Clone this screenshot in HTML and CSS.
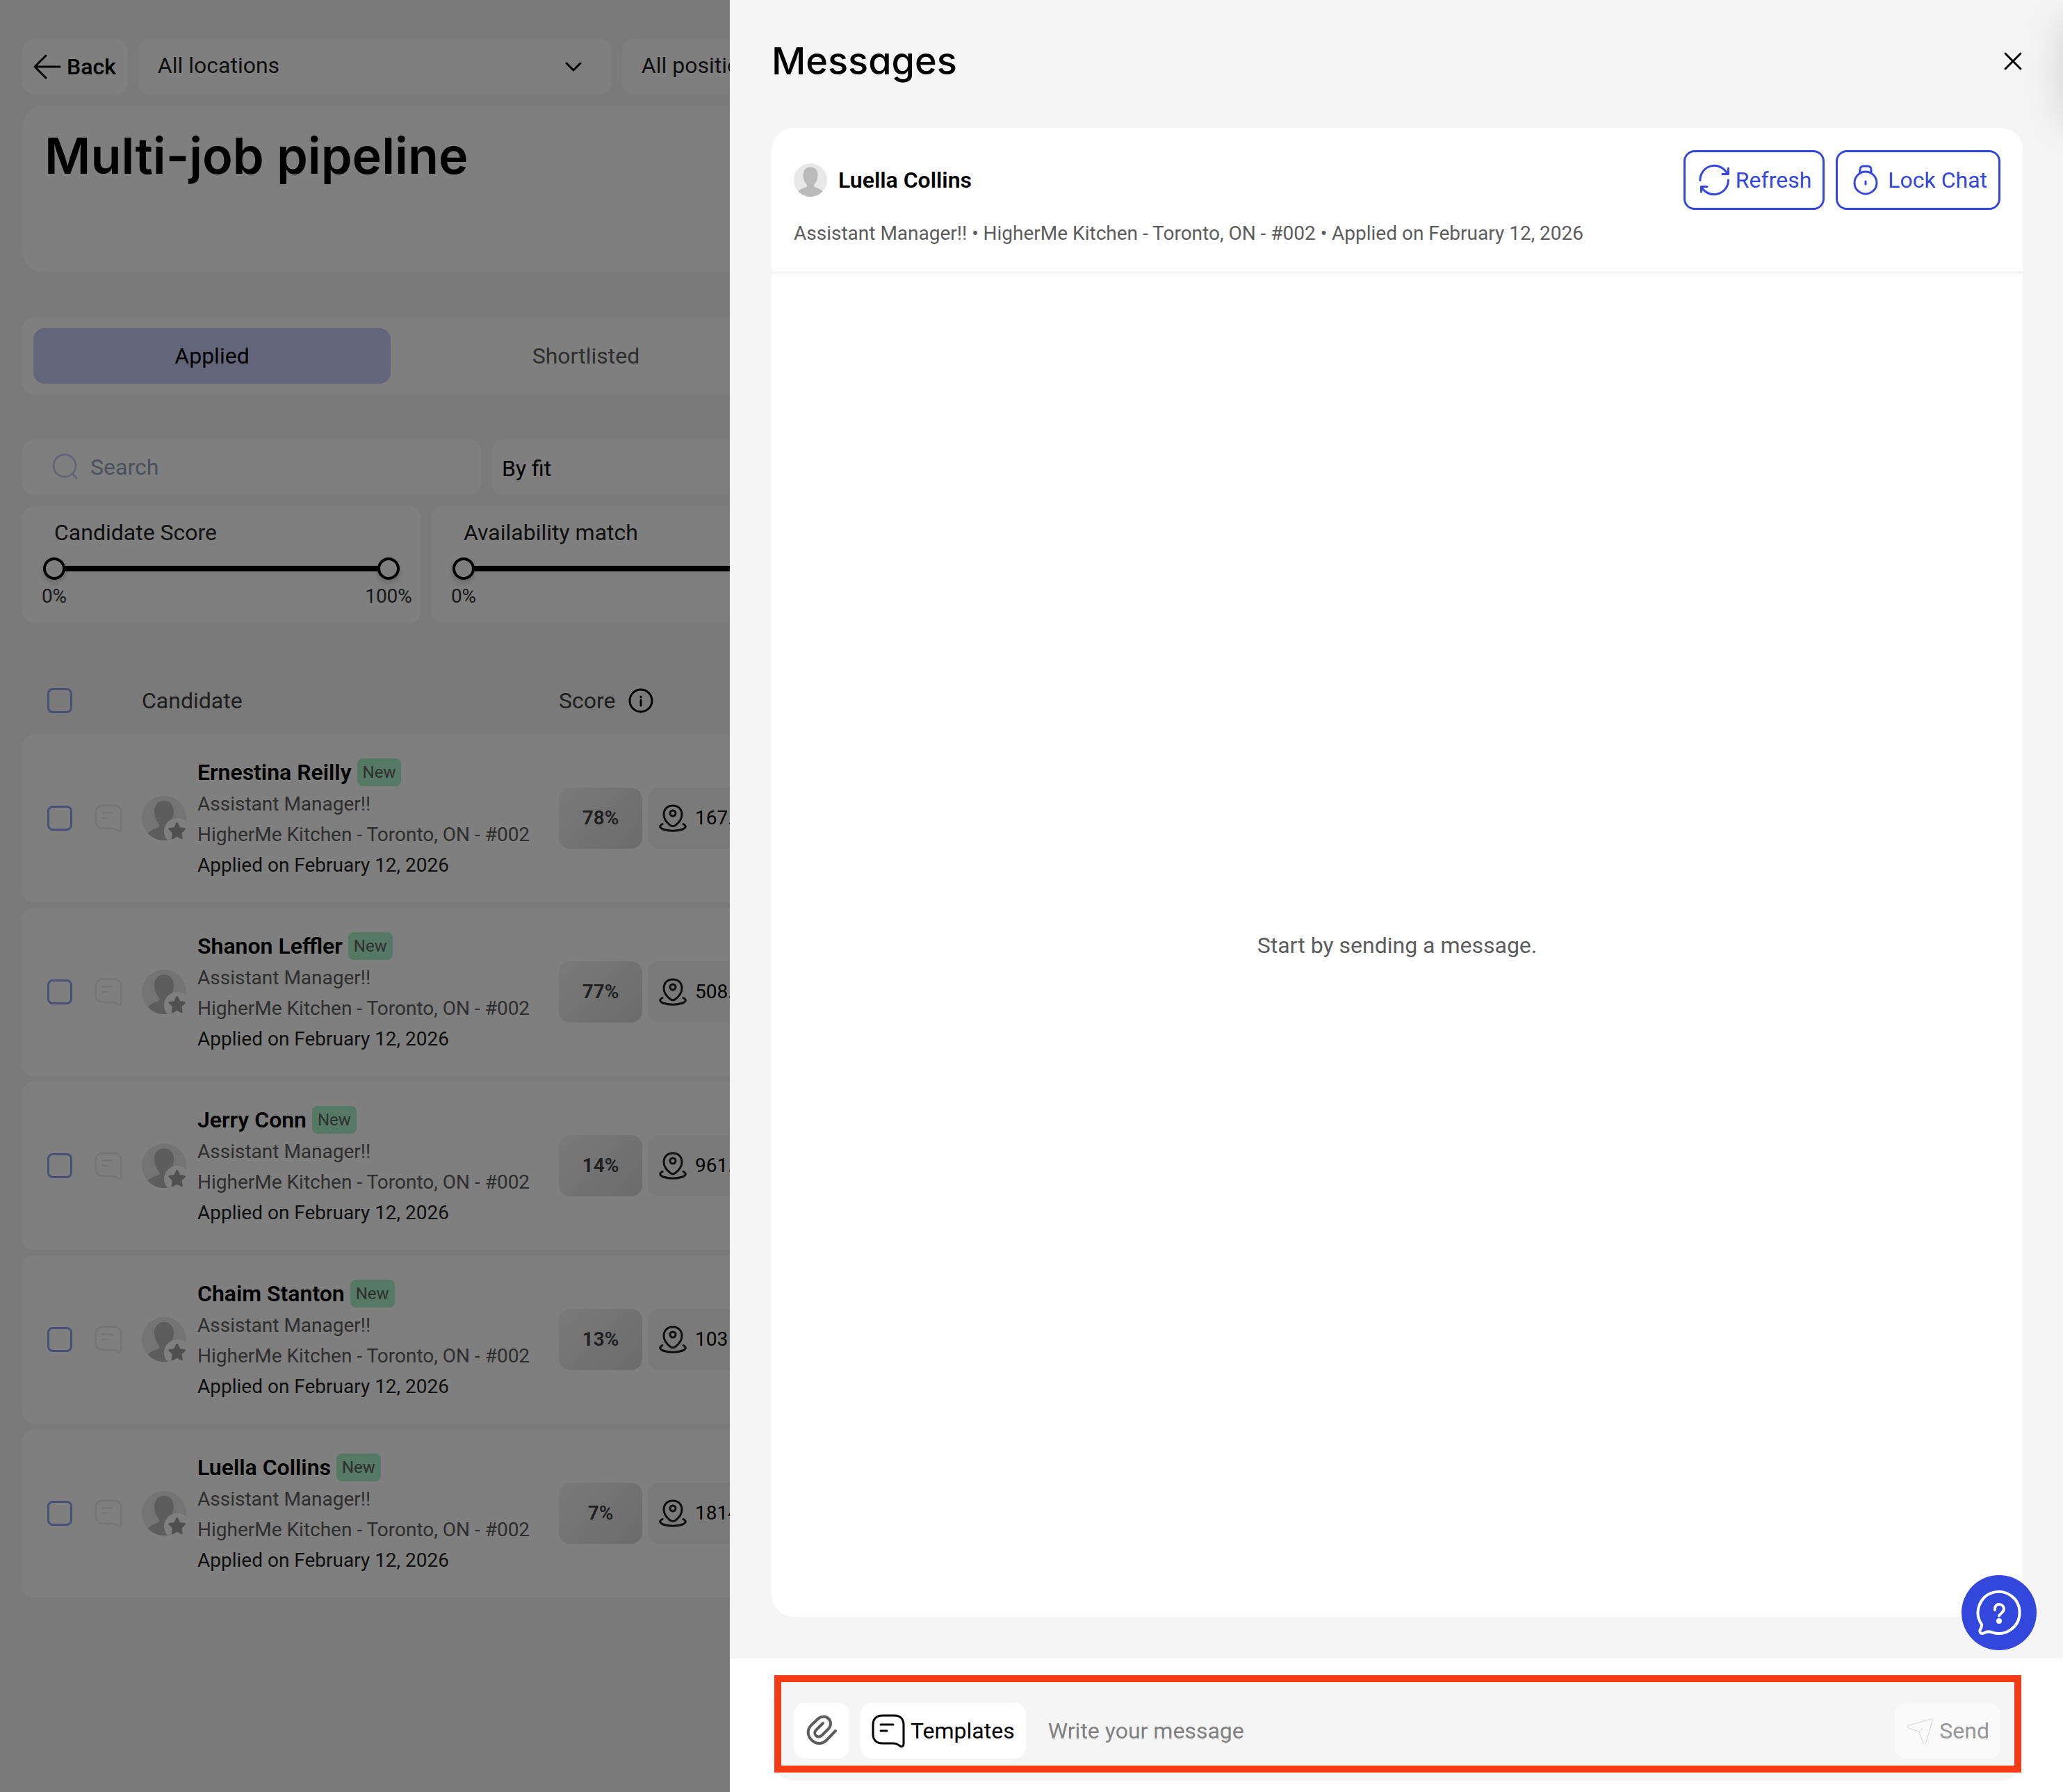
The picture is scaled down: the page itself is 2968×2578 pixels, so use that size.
FILE: index.html
```html
<!DOCTYPE html>
<html lang="en">
<head>
<meta charset="utf-8">
<meta name="viewport" content="width=device-width, initial-scale=1">
<title>Multi-job pipeline</title>
<link rel="stylesheet" href="styles.css">
</head>
<body>
<svg class="sprite" aria-hidden="true">
  <symbol id="note" viewBox="0 0 48 48">
    <path d="M15 2H33C41 2 46 7 46 15V43C46 46 44 47 41 46C38 44 37 42 32 42H15C7 42 2 37 2 29V15C2 7 7 2 15 2Z"/>
    <path d="M13 15H31M13 24H22"/>
  </symbol>
  <symbol id="person" viewBox="0 0 64 64">
    <circle cx="32" cy="32" r="32" fill="#e8e8e8"/>
    <path fill="#bababa" d="M32 7C40 7 46 13 46 22C46 32 42 37 39 41C38 44 39 45 42 46C48 48 52 50 55.300 54A32 32 0 0 1 8.700 54C12 50 16 48 22 46C25 45 26 44 25 41C22 37 18 32 18 22C18 13 24 7 32 7Z"/>
  </symbol>
  <symbol id="person-starred" viewBox="0 0 64 64">
    <clipPath id="round"><circle cx="32" cy="32" r="32"/></clipPath>
    <use href="#person"/>
    <circle cx="51" cy="51" r="19" fill="#fff" clip-path="url(#round)"/>
    <path fill="#a0a0a0" stroke="#a0a0a0" stroke-width="3" stroke-linejoin="round" d="M50.700 39.500L54 46.500L61.500 47.500L56 53L57.300 60.800L50.700 57.200L44.100 60.800L45.400 53L39.900 47.500L47.400 46.500Z"/>
  </symbol>
  <symbol id="pin" viewBox="0 0 40 40">
    <path d="M20 2C28 2 33 7 33 15C33 22 28 27 23.500 30.500C21 32.300 19 32.300 16.500 30.500C12 27 7 22 7 15C7 7 12 2 20 2Z"/>
    <circle cx="20" cy="13" r="4"/>
    <path d="M5 28.500C0 31 1 34 6 36C14 39 26 39 34 36C39 34 40 31 35 28.500"/>
  </symbol>
</svg>

<main class="page">
  <div class="toolbar">
    <button class="back" type="button">
      <svg class="icon-40" viewBox="0 0 40 40" aria-hidden="true"><path d="M38 20H2M18 4L2 20L18 36"/></svg>
      Back
    </button>
    <div class="select">
      <select aria-label="Location"><option>All locations</option></select>
      <svg viewBox="0 0 24 14" aria-hidden="true"><path d="M2 2L12 12L22 2"/></svg>
    </div>
    <div class="select">
      <select aria-label="Position"><option>All positions</option></select>
      <svg viewBox="0 0 24 14" aria-hidden="true"><path d="M2 2L12 12L22 2"/></svg>
    </div>
  </div>

  <header class="title-card"><h1>Multi-job pipeline</h1></header>

  <nav class="tabs">
    <button class="tab active" type="button">Applied</button>
    <button class="tab" type="button">Shortlisted</button>
  </nav>

  <div class="filters">
    <label class="search">
      <svg viewBox="0 0 40 40" aria-hidden="true"><circle cx="19" cy="18" r="16"/><path d="M31 30L36 36"/></svg>
      <input type="search" placeholder="Search" aria-label="Search">
    </label>
    <select class="sort" aria-label="Sort"><option>By fit</option></select>
  </div>

  <div class="ranges">
    <fieldset class="range">
      <legend>Candidate Score</legend>
      <div class="slider">
        <input type="range" value="0" aria-label="Minimum candidate score">
        <input type="range" value="100" aria-label="Maximum candidate score">
      </div>
      <div class="scale"><span>0%</span><span>100%</span></div>
    </fieldset>
    <fieldset class="range">
      <legend>Availability match</legend>
      <div class="slider">
        <input type="range" value="0" aria-label="Minimum availability match">
        <input type="range" value="100" aria-label="Maximum availability match">
      </div>
      <div class="scale"><span>0%</span><span>100%</span></div>
    </fieldset>
  </div>

  <table class="candidates">
    <colgroup><col class="col-check"><col class="col-note"><col class="col-person"><col></colgroup>
    <thead>
      <tr>
        <th><input type="checkbox" aria-label="Select all"></th>
        <th></th>
        <th>Candidate</th>
        <th>
          <div class="score-head">Score
            <svg viewBox="0 0 36 36" aria-hidden="true"><circle cx="18" cy="18" r="16"/><path d="M18 12V13M18 17V25"/></svg>
          </div>
        </th>
      </tr>
    </thead>
    <tbody>
      <tr>
        <td><input type="checkbox" aria-label="Select Ernestina Reilly"></td>
        <td><svg class="note"><use href="#note"/></svg></td>
        <td><div class="person"><svg class="avatar"><use href="#person-starred"/></svg><div>
          <div class="name">Ernestina Reilly <span class="badge">New</span></div>
          <div class="meta">Assistant Manager!!</div>
          <div class="meta">HigherMe Kitchen - Toronto, ON - #002</div>
          <div class="meta date">Applied on February 12, 2026</div>
        </div></div></td>
        <td><div class="scores"><span class="score">78%</span><span class="distance"><svg><use href="#pin"/></svg>167.</span></div></td>
      </tr>
      <tr>
        <td><input type="checkbox" aria-label="Select Shanon Leffler"></td>
        <td><svg class="note"><use href="#note"/></svg></td>
        <td><div class="person"><svg class="avatar"><use href="#person-starred"/></svg><div>
          <div class="name">Shanon Leffler <span class="badge">New</span></div>
          <div class="meta">Assistant Manager!!</div>
          <div class="meta">HigherMe Kitchen - Toronto, ON - #002</div>
          <div class="meta date">Applied on February 12, 2026</div>
        </div></div></td>
        <td><div class="scores"><span class="score">77%</span><span class="distance"><svg><use href="#pin"/></svg>508.</span></div></td>
      </tr>
      <tr>
        <td><input type="checkbox" aria-label="Select Jerry Conn"></td>
        <td><svg class="note"><use href="#note"/></svg></td>
        <td><div class="person"><svg class="avatar"><use href="#person-starred"/></svg><div>
          <div class="name">Jerry Conn <span class="badge">New</span></div>
          <div class="meta">Assistant Manager!!</div>
          <div class="meta">HigherMe Kitchen - Toronto, ON - #002</div>
          <div class="meta date">Applied on February 12, 2026</div>
        </div></div></td>
        <td><div class="scores"><span class="score">14%</span><span class="distance"><svg><use href="#pin"/></svg>961.</span></div></td>
      </tr>
      <tr>
        <td><input type="checkbox" aria-label="Select Chaim Stanton"></td>
        <td><svg class="note"><use href="#note"/></svg></td>
        <td><div class="person"><svg class="avatar"><use href="#person-starred"/></svg><div>
          <div class="name">Chaim Stanton <span class="badge">New</span></div>
          <div class="meta">Assistant Manager!!</div>
          <div class="meta">HigherMe Kitchen - Toronto, ON - #002</div>
          <div class="meta date">Applied on February 12, 2026</div>
        </div></div></td>
        <td><div class="scores"><span class="score">13%</span><span class="distance"><svg><use href="#pin"/></svg>103</span></div></td>
      </tr>
      <tr>
        <td><input type="checkbox" aria-label="Select Luella Collins"></td>
        <td><svg class="note"><use href="#note"/></svg></td>
        <td><div class="person"><svg class="avatar"><use href="#person-starred"/></svg><div>
          <div class="name">Luella Collins <span class="badge">New</span></div>
          <div class="meta">Assistant Manager!!</div>
          <div class="meta">HigherMe Kitchen - Toronto, ON - #002</div>
          <div class="meta date">Applied on February 12, 2026</div>
        </div></div></td>
        <td><div class="scores"><span class="score">7%</span><span class="distance"><svg><use href="#pin"/></svg>1814</span></div></td>
      </tr>
    </tbody>
  </table>
</main>

<div class="overlay">
  <section class="drawer" role="dialog" aria-labelledby="drawer-title">
    <header class="drawer-head">
      <h2 id="drawer-title">Messages</h2>
      <button class="close" type="button" aria-label="Close">
        <svg viewBox="0 0 28 28" aria-hidden="true"><path d="M3 3L25 25M25 3L3 25"/></svg>
      </button>
    </header>

    <div class="chat">
      <div class="chat-head">
        <div class="chat-row">
          <svg class="avatar-small"><use href="#person"/></svg>
          <span class="chat-name">Luella Collins</span>
          <button class="outline" type="button">
            <svg viewBox="0 0 48 48" aria-hidden="true"><path d="M5 24.500A20.500 20.500 0 0 1 44 15M45.500 7V15.500H37M45.500 24A20.500 20.500 0 0 1 7 34M6.500 41V33.500H15"/></svg>
            Refresh
          </button>
          <button class="outline" type="button">
            <svg viewBox="0 0 48 48" aria-hidden="true"><circle cx="24" cy="28" r="16"/><path d="M16 14V9C16 6 18 4 21 4H27C30 4 32 6 32 9V14M24 26V30"/></svg>
            Lock Chat
          </button>
        </div>
        <p>Assistant Manager!! • HigherMe Kitchen - Toronto, ON - #002 • Applied on February 12, 2026</p>
      </div>
      <div class="chat-body">Start by sending a message.</div>
    </div>

    <footer class="drawer-foot">
      <form class="composer">
        <button class="attach" type="button" aria-label="Attach file">
          <svg viewBox="0 0 48 48" aria-hidden="true"><path d="M44 24L31 37.500C25 43.500 17 43.500 10.500 38C3 31.500 3 22.500 9 16L18 7.500C23 2.500 30 2.500 34 6.500C38 10.500 38 16.500 34 21L25 30C22 33 18 33 16 31C13.500 28.500 14 25 16 23L26 13"/></svg>
        </button>
        <button class="templates" type="button">
          <svg aria-hidden="true"><use href="#note"/></svg>
          Templates
        </button>
        <input type="text" placeholder="Write your message" aria-label="Message">
        <button class="send" type="submit" disabled>
          <svg viewBox="0 0 40 40" aria-hidden="true"><path d="M3 12.500L36 2.800Q39 2.300 38.300 5L28.500 38Q27 41 25 38L19 21.500L2.500 15.500Q0 14 3 12.500ZM19 21.500L24 16.500"/></svg>
          Send
        </button>
        <span class="highlight"></span>
      </form>
    </footer>

    <div class="edge-tab"></div>
    <button class="help" type="button" aria-label="Help">
      <svg viewBox="0 0 108 108" aria-hidden="true">
        <path d="M29 71A30 30 0 1 1 44 82.300C39 80.500 36 81 32 83.500C28 85 26 83 26.500 79C28.500 76 29.500 74 29 71Z"/>
        <path d="M48 50C47.500 45 50 42 54 42C58 42 61 45 61 49C61 53 56 55 54 58.500"/>
        <circle class="dot" cx="54" cy="66" r="4"/>
      </svg>
    </button>
  </section>
</div>
</body>
</html>
```
FILE: styles.css
```css
* {
  box-sizing: border-box;
}

body {
  margin: 0;
  background: #f5f5f5;
  color: #1f1f1f;
  font: 400 32px/48px Roboto, "Liberation Sans", sans-serif;
}

button,
input,
select {
  margin: 0;
  padding: 0;
  border: 0;
  background: none;
  color: inherit;
  font: inherit;
}

button {
  display: flex;
  align-items: center;
  justify-content: center;
  gap: 8px;
  white-space: nowrap;
}

h1,
h2,
p {
  margin: 0;
}

h1,
h2 {
  color: #000;
  font-family: Inter, "Liberation Sans", sans-serif;
  font-feature-settings: "cv11";
}

svg {
  display: block;
  flex: none;
  fill: none;
  stroke: currentColor;
  stroke-width: 3;
  stroke-linecap: round;
  stroke-linejoin: round;
}

.sprite {
  position: absolute;
  width: 0;
  height: 0;
}

/* Pipeline page */

.page {
  min-height: 100vh;
  padding: 56px 32px 0;
}

.toolbar,
.filters,
.ranges {
  display: flex;
  gap: 16px;
}

.back {
  height: 80px;
  padding: 0 16px;
  border-radius: 16px;
  background: #fff;
  color: #000;
  font-weight: 500;
}

.icon-40 {
  width: 40px;
  height: 40px;
}

.select {
  display: grid;
  width: 680px;
  align-items: center;
}

.select select,
.select svg {
  grid-area: 1 / 1;
}

.select select {
  height: 80px;
  padding: 0 80px 4px 28px;
  border-radius: 16px;
  background: #fff;
  appearance: none;
}

.select svg {
  width: 24px;
  height: 14px;
  margin-right: 42px;
  justify-self: end;
  color: #000;
}

.title-card {
  height: 240px;
  margin-top: 16px;
  padding: 24px 32px;
  border-radius: 32px;
  background: #fff;
}

h1 {
  font-size: 72px;
  font-weight: 600;
  line-height: 96px;
}

.tabs {
  display: flex;
  gap: 24px;
  margin: 64px 0;
  padding: 16px;
  border-radius: 16px;
  background: #fff;
}

.tab {
  width: 514px;
  height: 80px;
  border-radius: 16px;
  color: #5c5c5c;
}

.tab.active {
  background: #c7caf5;
  color: #000;
}

.search {
  display: flex;
  align-items: center;
  gap: 16px;
  width: 660px;
  height: 80px;
  padding: 0 42px;
  border-radius: 16px;
  background: #fff;
}

.search svg {
  width: 40px;
  height: 40px;
  color: #c7caf5;
}

.search input {
  flex: 1;
  min-width: 0;
  appearance: none;
}

.search input::placeholder {
  color: #94a3b8;
}

.sort {
  width: 660px;
  height: 80px;
  padding: 4px 14px 0;
  border-radius: 16px;
  background: #fff;
  color: #000;
  appearance: none;
}

.ranges {
  margin-top: 16px;
}

.range {
  width: 573px;
  min-width: 0;
  margin: 0;
  padding: 14px 30px 22px;
  border: 0;
  border-radius: 16px;
  background: #fff;
}

.range legend {
  float: left;
  width: 100%;
  padding: 0 16px;
}

.slider {
  display: grid;
  clear: both;
  padding-top: 12px;
  background: linear-gradient(#000, #000) center 24px / calc(100% - 32px) 8px no-repeat;
}

.slider input {
  grid-area: 1 / 1;
  width: 100%;
  height: 32px;
  appearance: none;
  pointer-events: none;
}

.slider input::-webkit-slider-thumb {
  width: 32px;
  height: 32px;
  border: 4px solid #000;
  border-radius: 50%;
  background: #fff;
  box-shadow: 0 4px 8px rgba(0, 0, 0, 0.2);
  appearance: none;
  pointer-events: auto;
}

.scale {
  display: flex;
  justify-content: space-between;
  margin: 8px -20px 0;
  color: #333;
  font-size: 28px;
  line-height: 32px;
}

.scale span {
  width: 72px;
  text-align: center;
}

.candidates {
  width: 100%;
  margin-top: 64px;
  border-spacing: 0 8px;
  table-layout: fixed;
}

.col-check {
  width: 88px;
}

.col-note {
  width: 84px;
}

.col-person {
  width: 600px;
}

.candidates th,
.candidates td {
  padding: 0;
  text-align: left;
  vertical-align: middle;
}

.candidates th {
  height: 80px;
  color: #3d3d3d;
  font-weight: 400;
}

.candidates td {
  height: 242px;
  background: #fff;
}

.candidates td:first-child {
  border-radius: 16px 0 0 16px;
}

.candidates td:last-child {
  border-radius: 0 16px 16px 0;
}

.candidates input {
  display: block;
  width: 36px;
  height: 36px;
  margin-left: 36px;
  border: 3px solid #949fef;
  border-radius: 8px;
  appearance: none;
}

.note {
  width: 40px;
  height: 40px;
  margin-left: 16px;
  color: #ebebeb;
}

.score-head,
.person,
.name,
.scores,
.distance {
  display: flex;
  align-items: center;
}

.score-head {
  gap: 18px;
}

.score-head svg {
  width: 36px;
  height: 36px;
  color: #000;
}

.person {
  gap: 16px;
}

.avatar {
  width: 64px;
  height: 64px;
  stroke: none;
}

.name {
  gap: 8px;
  color: #000;
  font-weight: 600;
}

.badge {
  padding: 0 8px;
  border-radius: 8px;
  background: #acf2cc;
  color: #5c5c5c;
  font-size: 24px;
  font-weight: 400;
  line-height: 40px;
}

.meta {
  color: #5c5c5c;
  font-size: 28px;
  line-height: 44px;
}

.meta.date {
  color: #1f1f1f;
}

.scores {
  gap: 8px;
  font-size: 28px;
}

.score {
  width: 120px;
  border-radius: 16px;
  background: linear-gradient(135deg, #f5f5f5, #d6d6d6);
  color: #3d3d3d;
  font-weight: 600;
  line-height: 88px;
  text-align: center;
}

.distance {
  gap: 12px;
  height: 88px;
  padding: 0 16px;
  border-radius: 16px;
  background: #f5f5f5;
  color: #000;
}

.distance svg {
  width: 40px;
  height: 40px;
  color: #1f1f1f;
}

/* Messages drawer */

.overlay {
  position: fixed;
  inset: 0;
  display: grid;
  grid-template-columns: 1050px 1fr;
  background: rgba(0, 0, 0, 0.5);
}

.drawer {
  position: relative;
  display: flex;
  grid-column: 2;
  flex-direction: column;
  overflow: hidden;
  background: #f5f5f5;
}

.drawer-head {
  display: flex;
  align-items: center;
  justify-content: space-between;
  padding: 56px 58px 64px 60px;
}

h2 {
  font-size: 54px;
  font-weight: 500;
  line-height: 64px;
}

.close {
  color: #000;
}

.close svg {
  width: 28px;
  height: 28px;
}

.chat {
  display: flex;
  flex: 1;
  flex-direction: column;
  margin: 0 58px 60px 60px;
  border-radius: 32px;
  background: #fff;
}

.chat-head {
  padding: 32px;
  border-bottom: 4px solid #f5f5f5;
  color: #5c5c5c;
  font-size: 28px;
  line-height: 44px;
}

.chat-row {
  display: flex;
  align-items: center;
  gap: 16px;
  margin-bottom: 12px;
}

.avatar-small {
  width: 48px;
  height: 48px;
  stroke: none;
}

.chat-name {
  flex: 1;
  color: #000;
  font-size: 32px;
  font-weight: 600;
}

.outline {
  height: 86px;
  padding: 0 16px;
  border: 3px solid #3347dd;
  border-radius: 16px;
  color: #3347dd;
  font-size: 32px;
}

.outline svg,
.attach svg,
.templates svg {
  width: 48px;
  height: 48px;
}

.chat-body {
  display: grid;
  flex: 1;
  place-items: center;
  color: #5c5c5c;
}

.drawer-foot {
  padding: 32px 58px 16px 60px;
  background: #fff;
}

.composer {
  position: relative;
  display: flex;
  gap: 16px;
  padding: 32px;
  border-radius: 32px;
  background: #f5f5f5;
}

.composer button {
  height: 80px;
  padding: 0 16px;
  border-radius: 16px;
  background: #fff;
}

.composer .attach {
  color: #5c5c5c;
}

.attach svg {
  stroke-width: 4;
}

.composer .templates {
  color: #000;
}

.composer input {
  flex: 1;
  min-width: 0;
  padding: 0 16px;
}

.composer input::placeholder {
  color: #808080;
}

.composer .send {
  background: #fafafa;
  color: #969696;
}

.send svg {
  width: 40px;
  height: 40px;
  color: #d6d6d6;
  stroke-width: 1;
}

.highlight {
  position: absolute;
  inset: -8px 2px 12px 4px;
  border: 10px solid #f13c17;
  pointer-events: none;
}

.edge-tab {
  position: absolute;
  top: 24px;
  left: 100%;
  width: 80px;
  height: 156px;
  border-radius: 24px;
  box-shadow: 0 0 60px rgba(0, 0, 0, 0.15);
}

.help {
  position: absolute;
  right: 38px;
  bottom: 204px;
  width: 108px;
  height: 108px;
  border-radius: 50%;
  background: #3347dd;
  color: #fff;
}

.help svg {
  width: 108px;
  height: 108px;
  stroke-width: 4;
}

.help .dot {
  fill: currentColor;
  stroke: none;
}
```
